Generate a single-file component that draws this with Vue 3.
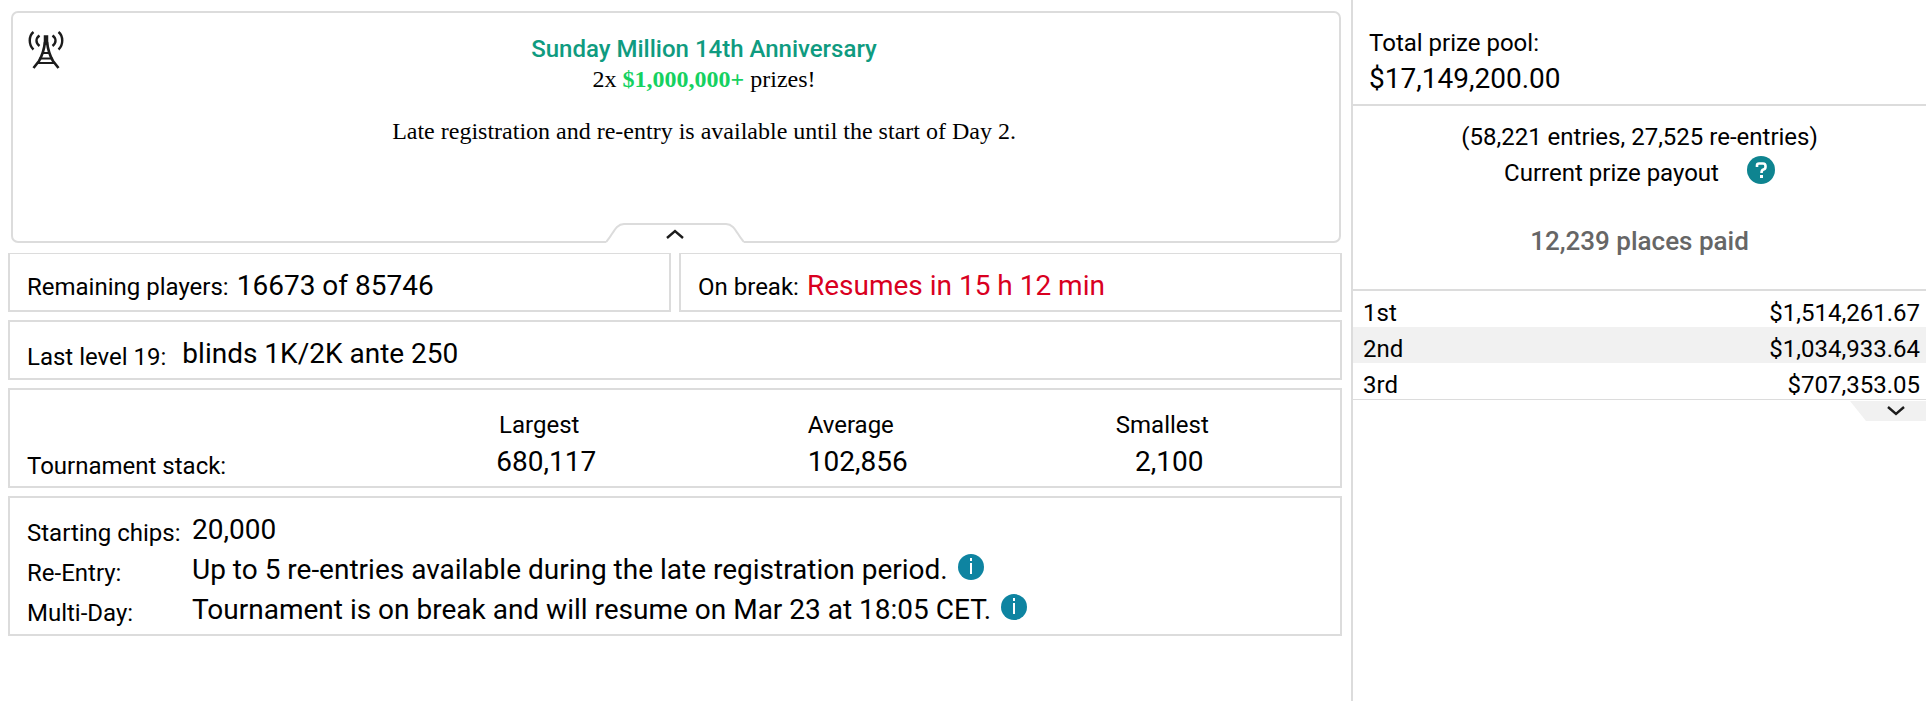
<script setup>
const stacks = [
  { label: 'Largest', value: '680,117' },
  { label: 'Average', value: '102,856' },
  { label: 'Smallest', value: '2,100' },
]

const details = [
  { label: 'Starting chips:', value: '20,000', info: false },
  { label: 'Re-Entry:', value: 'Up to 5 re-entries available during the late registration period.', info: true },
  { label: 'Multi-Day:', value: 'Tournament is on break and will resume on Mar 23 at 18:05 CET.', info: true },
]

const payouts = [
  { place: '1st', prize: '$1,514,261.67' },
  { place: '2nd', prize: '$1,034,933.64' },
  { place: '3rd', prize: '$707,353.05' },
]
</script>

<template>
  <div class="lobby">
    <main class="main">
      <section class="notice">
        <svg class="antenna" viewBox="0 0 36 38" fill="none" stroke="#1c1c1c" aria-hidden="true">
          <path d="M5.500 1C.5 5 .5 14 5.500 18.500M30.500 1c5 4 5 13 0 17.500" stroke-width="2.400" />
          <path d="M11.500 4.500C7.500 7.500 7.500 12 11.500 15M24.500 4.500c4 3 4 7.500 0 10.500" stroke-width="2.400" />
          <path d="M16.500 5h3v8h-3z" fill="#1c1c1c" stroke-width="1.500" />
          <path d="M17 11c-1 8-3 14-6 19l-5.500 7M19 11c1 8 3 14 6 19l5.500 7" stroke-width="2.600" />
          <path d="M14 22h8M11.500 27.500h13M10 32h16" stroke-width="2.200" />
        </svg>
        <div class="notice-text">
          <h1 class="title">Sunday Million 14th Anniversary</h1>
          <p class="line">2x <strong class="prize">$1,000,000+</strong> prizes!</p>
          <p class="line late">Late registration and re-entry is available until the start of Day 2.</p>
        </div>
        <button class="collapse" type="button" aria-label="Collapse">
          <svg viewBox="0 0 138 21" fill="none" aria-hidden="true">
            <path d="M0 21V19H1C7 13 9 2 18 2h102c9 0 11 11 17 17h1v2z" fill="#fff" />
            <path d="M0 20C7 13 9 2 18 2h102c9 0 11 11 18 18" stroke="#dcdcdc" stroke-width="2" />
            <path d="M61 16l8-7 8 7" stroke="#1c1c1c" stroke-width="2.400" />
          </svg>
        </button>
      </section>

      <div class="pair">
        <section class="card status">
          <span class="label">Remaining players:</span>
          <span class="value">16673 of 85746</span>
        </section>
        <section class="card status">
          <span class="label">On break:</span>
          <span class="value alert">Resumes in 15 h 12 min</span>
        </section>
      </div>

      <section class="card level">
        <span class="label low">Last level 19:</span>
        <span class="value">blinds 1K/2K ante 250</span>
      </section>

      <section class="card stack">
        <table class="stack-table">
          <thead>
            <tr>
              <td class="stack-name"></td>
              <th v-for="s in stacks" :key="s.label" scope="col">{{ s.label }}</th>
            </tr>
          </thead>
          <tbody>
            <tr>
              <th class="stack-label" scope="row">Tournament stack:</th>
              <td v-for="s in stacks" :key="s.label" class="stack-value">{{ s.value }}</td>
            </tr>
          </tbody>
        </table>
      </section>

      <dl class="card details">
        <div v-for="d in details" :key="d.label" class="detail">
          <dt class="label low">{{ d.label }}</dt>
          <dd class="value">
            {{ d.value }}
            <button v-if="d.info" class="icon-button" type="button" aria-label="More information">
              <svg class="info" viewBox="0 0 26 26" aria-hidden="true">
                <circle cx="13" cy="13" r="13" fill="#0e84a1" />
                <path d="M12 4h2v3h-2zM12 9h2v11h-2z" fill="#fff" />
              </svg>
            </button>
          </dd>
        </div>
      </dl>
    </main>

    <aside class="side">
      <section class="pool">
        <div class="pool-label">Total prize pool:</div>
        <div class="pool-value">$17,149,200.00</div>
      </section>
      <section class="summary">
        <div>(58,221 entries, 27,525 re-entries)</div>
        <div class="payout-line">
          <span>Current prize payout</span>
          <button class="icon-button" type="button" aria-label="Help">
            <svg class="help" viewBox="0 0 28 28" fill="none" aria-hidden="true">
              <circle cx="14" cy="14" r="14" fill="#0e8490" />
              <path d="M10 11V9.500Q10 7.500 12 7.500h4Q18.500 7.500 18.500 10v1Q18.500 13 16.500 13.500 14.500 14 14.500 17" stroke="#fff" stroke-width="2.600" />
              <path d="M13 19h3v3h-3z" fill="#fff" />
            </svg>
          </button>
        </div>
        <div class="places">12,239 places paid</div>
      </section>
      <table class="payouts">
        <tbody>
          <tr v-for="p in payouts" :key="p.place">
            <th scope="row">{{ p.place }}</th>
            <td>{{ p.prize }}</td>
          </tr>
        </tbody>
      </table>
      <button class="expand" type="button" aria-label="Show more places">
        <svg viewBox="0 0 20 10" fill="none" stroke="#1c1c1c" stroke-width="2.400" aria-hidden="true">
          <path d="M2 1l8 7 8-7" />
        </svg>
      </button>
    </aside>
  </div>
</template>

<style>
body {
  margin: 0;
  background: #fff;
}
</style>

<style scoped>
.lobby {
  display: grid;
  grid-template-columns: minmax(0, 235fr) minmax(0, 100fr);
  min-height: 100vh;
  font-family: Roboto, "Liberation Sans", sans-serif;
  font-size: 24px;
  line-height: 36px;
  color: #000;
}

.main {
  display: flex;
  flex-direction: column;
  gap: 8px;
  padding: 11px 9px 11px 8px;
}

.notice {
  position: relative;
  display: flex;
  box-sizing: border-box;
  min-height: 232px;
  margin: 0 1px 2px 3px;
  padding: 18px 0 18px 15px;
  border: 2px solid #dcdcdc;
  border-radius: 7px;
}

.antenna {
  flex: none;
  width: 36px;
  height: 38px;
}

.notice-text {
  flex: 1;
  padding: 3px 0 0 5px;
  font-family: "Liberation Serif", serif;
  line-height: 30px;
  text-align: center;
}

.title {
  margin: 0;
  font-family: Roboto, "Liberation Sans", sans-serif;
  font-size: 24px;
  font-weight: 500;
  color: #0f9b80;
}

.line {
  margin: 0;
}

.late {
  margin-top: 22px;
}

.prize {
  color: #15d160;
}

button {
  padding: 0;
  border: 0;
  background: none;
  cursor: pointer;
}

svg {
  display: block;
}

.collapse {
  position: absolute;
  bottom: -2px;
  left: 50%;
  width: 138px;
  height: 21px;
  margin-left: -70px;
}

.pair {
  display: grid;
  grid-template-columns: 1fr 1fr;
  gap: 8px;
}

.card {
  margin: 0;
  padding: 12px 17px 4px;
  border: 2px solid #dcdcdc;
}

.status {
  display: flex;
  align-items: baseline;
  gap: 8px;
  border-top-width: 1px;
}

.value {
  font-size: 28px;
  line-height: 40px;
}

.alert {
  color: #d9001f;
}

.low {
  padding-top: 6px;
  line-height: 34px;
}

.level {
  display: flex;
  gap: 16px;
}

.stack {
  padding: 17px 15px 5px 17px;
}

.stack-table {
  width: 100%;
  table-layout: fixed;
  border-collapse: collapse;
}

.stack-table th,
.stack-table td {
  padding: 0;
  font-weight: 400;
}

.stack-table thead th {
  padding-right: 14px;
}

.stack-table .stack-name {
  width: 28%;
}

.stack-table .stack-label {
  padding-top: 8px;
  line-height: 30px;
  text-align: left;
}

.stack-table .stack-value {
  font-size: 28px;
  line-height: 38px;
  text-align: center;
}

.details {
  padding: 12px 17px 4px;
}

.detail {
  display: grid;
  grid-template-columns: 165px 1fr;
}

.details .value {
  display: flex;
  align-items: center;
  gap: 10px;
  margin: 0;
}

.icon-button {
  margin-bottom: 6px;
}

.info {
  width: 26px;
  height: 26px;
}

.help {
  width: 28px;
  height: 28px;
}

.side {
  border-left: 2px solid #dcdcdc;
}

.pool {
  padding: 25px 16px 7px;
  border-bottom: 2px solid #dcdcdc;
}

.pool-value {
  font-size: 28px;
}

.summary {
  padding: 13px 16px 30px;
  border-bottom: 2px solid #dcdcdc;
  text-align: center;
}

.payout-line {
  display: flex;
  align-items: center;
  justify-content: center;
  gap: 28px;
}

.places {
  margin-top: 32px;
  font-size: 26px;
  font-weight: 500;
  color: #666;
}

.payouts {
  width: 100%;
  border-collapse: collapse;
  border-bottom: 1px solid #dcdcdc;
  line-height: 28px;
}

.payouts tr:nth-child(even) {
  background: #f1f1f1;
}

.payouts th {
  padding: 8px 0 0 10px;
  font-weight: 400;
  text-align: left;
}

.payouts td {
  padding: 8px 6px 0 0;
  text-align: right;
}

.expand {
  display: flex;
  align-items: center;
  justify-content: center;
  width: 76px;
  height: 20px;
  margin: 1px 0 0 auto;
  padding-left: 16px;
  background: #f1f1f1;
  clip-path: polygon(0 0, 100% 0, 100% 100%, 16px 100%);
}

.expand svg {
  width: 20px;
  height: 10px;
}
</style>
